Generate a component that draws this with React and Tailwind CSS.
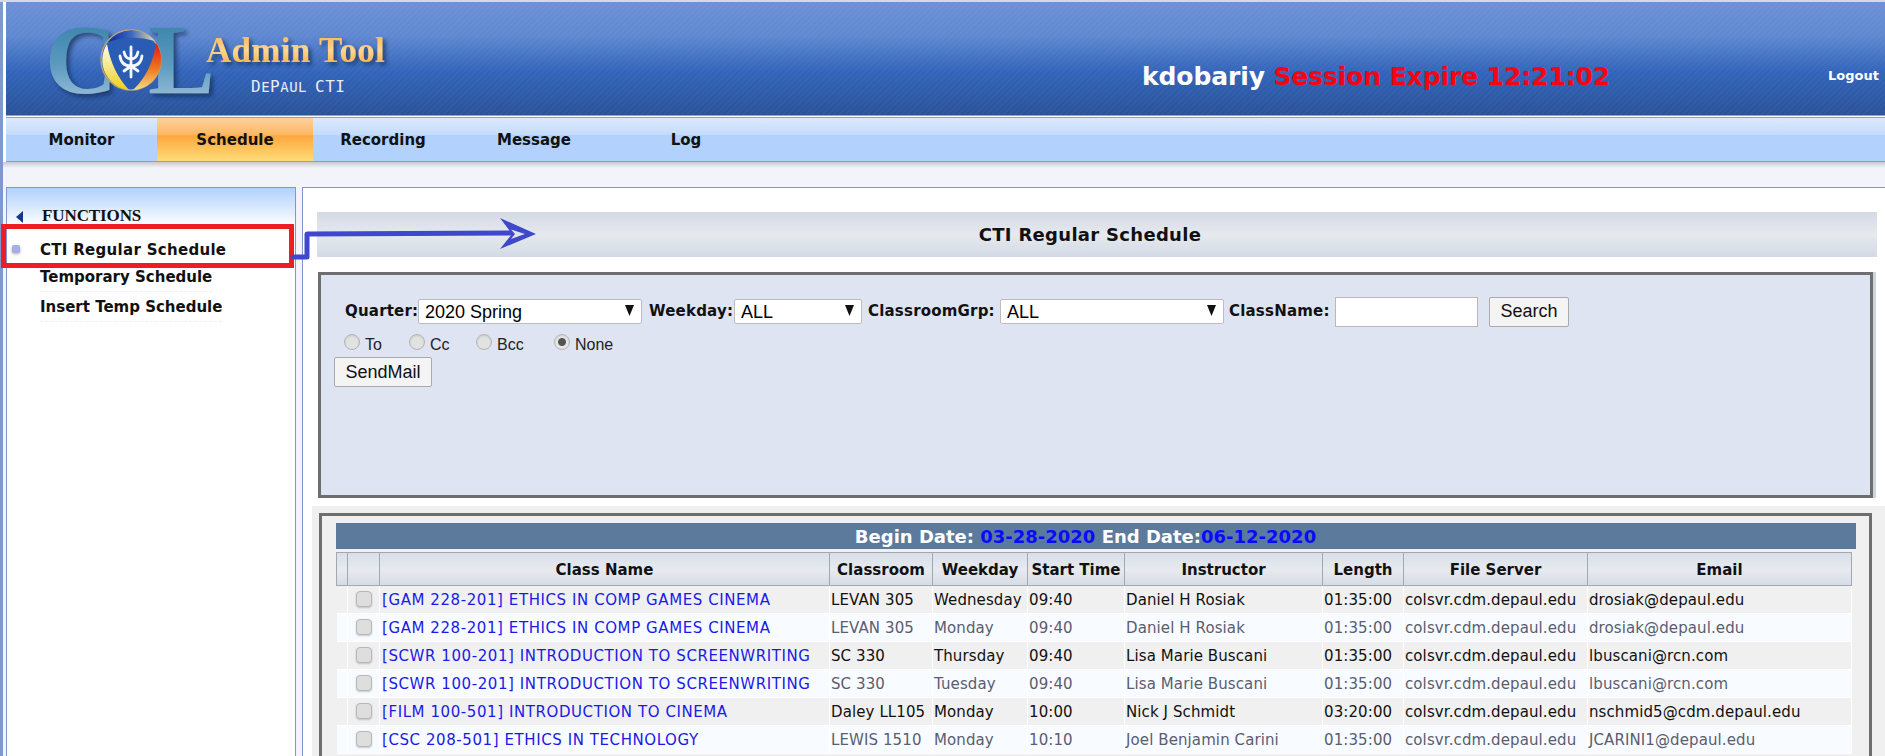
import React from "react";

const rows = [
  ["[GAM 228-201] ETHICS IN COMP GAMES CINEMA", "LEVAN 305", "Wednesday", "09:40", "Daniel H Rosiak", "01:35:00", "colsvr.cdm.depaul.edu", "drosiak@depaul.edu"],
  ["[GAM 228-201] ETHICS IN COMP GAMES CINEMA", "LEVAN 305", "Monday", "09:40", "Daniel H Rosiak", "01:35:00", "colsvr.cdm.depaul.edu", "drosiak@depaul.edu"],
  ["[SCWR 100-201] INTRODUCTION TO SCREENWRITING", "SC 330", "Thursday", "09:40", "Lisa Marie Buscani", "01:35:00", "colsvr.cdm.depaul.edu", "lbuscani@rcn.com"],
  ["[SCWR 100-201] INTRODUCTION TO SCREENWRITING", "SC 330", "Tuesday", "09:40", "Lisa Marie Buscani", "01:35:00", "colsvr.cdm.depaul.edu", "lbuscani@rcn.com"],
  ["[FILM 100-501] INTRODUCTION TO CINEMA", "Daley LL105", "Monday", "10:00", "Nick J Schmidt", "03:20:00", "colsvr.cdm.depaul.edu", "nschmid5@cdm.depaul.edu"],
  ["[CSC 208-501] ETHICS IN TECHNOLOGY", "LEWIS 1510", "Monday", "10:10", "Joel Benjamin Carini", "01:35:00", "colsvr.cdm.depaul.edu", "JCARINI1@depaul.edu"],
];

const heads = ["", "", "Class Name", "Classroom", "Weekday", "Start Time", "Instructor", "Length", "File Server", "Email"];
const widths = [11, 32, 450, 103, 95, 97, 198, 81, 184, 264];

function Logo() {
  return (
    <svg width="420" height="114" viewBox="6 2 420 114" className="shrink-0">
      <defs>
        <linearGradient id="col" x1="0" y1="0" x2="0" y2="1">
          <stop offset="0" stopColor="#2c7ba6" />
          <stop offset="0.55" stopColor="#5d9abf" />
          <stop offset="1" stopColor="#aecde3" />
        </linearGradient>
        <linearGradient id="gold" x1="0" y1="0" x2="0" y2="1">
          <stop offset="0" stopColor="#f7b24c" />
          <stop offset="0.5" stopColor="#ffd58f" />
          <stop offset="1" stopColor="#f6a431" />
        </linearGradient>
        <linearGradient id="segTop" x1="0" y1="0" x2="1" y2="0">
          <stop offset="0" stopColor="#16249a" />
          <stop offset="0.5" stopColor="#3a68c2" />
          <stop offset="1" stopColor="#ead9a2" />
        </linearGradient>
        <linearGradient id="segRight" x1="0" y1="0" x2="0" y2="1">
          <stop offset="0" stopColor="#e0141a" />
          <stop offset="0.55" stopColor="#ee7a1e" />
          <stop offset="1" stopColor="#f6dc8a" />
        </linearGradient>
        <linearGradient id="segLeft" x1="0" y1="0" x2="0" y2="1">
          <stop offset="0" stopColor="#fbfbf2" />
          <stop offset="0.45" stopColor="#f6ea92" />
          <stop offset="1" stopColor="#f0cf14" />
        </linearGradient>
        <filter id="sh" x="-20%" y="-20%" width="140%" height="140%">
          <feDropShadow dx="3" dy="3" stdDeviation="2" floodColor="#10264f" floodOpacity="0.7" />
        </filter>
        <filter id="soft" x="-10%" y="-10%" width="120%" height="120%">
          <feGaussianBlur stdDeviation="0.5" />
        </filter>
      </defs>
      <g filter="url(#sh)" fontFamily="'Liberation Serif', serif">
        <text x="45" y="93" fontSize="100" fontWeight="700" fill="url(#col)">C</text>
        <text x="148" y="93" fontSize="100" fontWeight="700" fill="url(#col)">L</text>
        <text x="206" y="62" fontSize="35" fontWeight="700" letterSpacing="0.3" fill="url(#gold)">Admin Tool</text>
      </g>
      <g filter="url(#soft)">
        <circle cx="131" cy="60" r="30" fill="#2b5cb3" stroke="#b9a678" strokeWidth="1.4" />
        <path d="M107 44 A30 30 0 0 0 129 90 Q 112 72 107 44 Z" fill="url(#segLeft)" />
        <path d="M156 43 A30 30 0 0 1 133 90 Q 152 72 156 43 Z" fill="url(#segRight)" />
        <path d="M108 42 A30 30 0 0 1 155 41 Q 131 34 108 42 Z" fill="url(#segTop)" />
        <path d="M131 47 V77 M120 56 C121 64 126 66 131 66 C136 66 141 64 142 56 M124 52 C125 57 128 59 131 59 C134 59 137 57 138 52 M124 71 L131 66 L138 71" stroke="#f4f7fc" strokeWidth="2.8" fill="none" strokeLinecap="round" />
      </g>
      <text x="251" y="92" fontSize="14" fill="#e8eef8" letterSpacing="0.5" fontFamily="'DejaVu Sans Mono', monospace">
        <tspan fontSize="16">D</tspan>E<tspan fontSize="16">P</tspan>AUL<tspan dx="8" fontSize="16">CTI</tspan>
      </text>
    </svg>
  );
}

function Select({ value, className }) {
  return (
    <span className={`relative inline-block h-[25px] ${className}`}>
      <select
        defaultValue={value}
        className="appearance-none w-full h-full bg-white border border-[#bdbdbd] rounded-[2px] pl-[6px] text-[18px] leading-[22px] text-black font-['Liberation_Sans',sans-serif]"
      >
        <option>{value}</option>
      </select>
      <svg width="9" height="11" viewBox="0 0 9 11" className="absolute right-[8px] top-[6px] pointer-events-none">
        <path d="M0 0 H9 L4.5 11 Z" fill="#111" />
      </svg>
    </span>
  );
}

function Radio({ label, checked, className }) {
  return (
    <label className={`flex items-center text-[16px] text-[#222] font-['Liberation_Sans',sans-serif] ${className}`}>
      <input
        type="radio"
        readOnly
        checked={!!checked}
        className="appearance-none w-[16px] h-[16px] rounded-full border border-[#b4b4b4] bg-[#e2e2e2] shadow-[inset_0_1px_2px_rgba(0,0,0,0.12)] checked:bg-[radial-gradient(circle,#555_0,#555_3.5px,#e8e8e8_4.5px)] -mt-[5px]"
      />
      <span className="ml-[5px] mt-[1px]">{label}</span>
    </label>
  );
}

function Label({ children, className = "" }) {
  return <span className={`font-bold text-[15px] tracking-[0.2px] text-[#111] whitespace-nowrap ${className}`}>{children}</span>;
}

export default function App() {
  return (
    <div className="w-[1885px] h-[756px] overflow-hidden relative bg-white font-['DejaVu_Sans',sans-serif]">
      <div className="h-[2px] bg-[#d8d8e0]" />
      <div className="h-[754px] border-l-[3px] border-[#7f98d0] flex flex-col">
        <div className="pl-[3px] bg-white">
          {/* header */}
          <header className="h-[114px] flex bg-[repeating-linear-gradient(135deg,rgba(255,255,255,0.025)_0,rgba(255,255,255,0.025)_2px,transparent_2px,transparent_4px),linear-gradient(180deg,#6c91d6_0%,#5f88d0_30%,#3264ba_62%,#2b5298_100%)] border-b border-[#8aa4cf]">
            <Logo />
            <div className="ml-[716px] mt-[60px] text-[25px] font-bold leading-[30px] whitespace-nowrap tracking-[-0.1px]">
              <span className="text-white">kdobariy</span>{" "}
              <span className="text-[#f60414]">Session Expire 12:21:02</span>
            </div>
            <a className="ml-auto mr-[6px] mt-[66px] text-white text-[13px] font-bold leading-[16px]">Logout</a>
          </header>
          {/* nav */}
          <nav className="h-[45px] mt-px flex border-t border-[#7ea3d3] border-b bg-[linear-gradient(180deg,#dce9fd_0%,#c6dcfc_38%,#b2d2fd_40%,#b2d2fd_100%)] font-bold text-[15px] text-[#111]">
            <a className="w-[151px] flex items-center justify-center pt-[2px]">Monitor</a>
            <a className="w-[156px] flex items-center justify-center pt-[2px] bg-[linear-gradient(180deg,#fdd0a0_0%,#fdb964_38%,#fda83e_42%,#fedc78_100%)]">Schedule</a>
            <a className="w-[140px] flex items-center justify-center pt-[2px]">Recording</a>
            <a className="w-[162px] flex items-center justify-center pt-[2px]">Message</a>
            <a className="w-[142px] flex items-center justify-center pt-[2px]">Log</a>
          </nav>
        </div>
        {/* body */}
        <div className="flex-1 min-h-0 flex flex-col bg-[linear-gradient(180deg,#c9c9cd_0,#f3f4f9_6px)] pt-[25px]">
          <div className="flex-1 min-h-0 flex pl-[3px]">
            {/* sidebar */}
            <aside className="w-[290px] shrink-0 border border-b-0 border-[#8297cf] bg-white">
              <div className="h-[38px] bg-[linear-gradient(180deg,#b1d1fd,#ffffff)] flex items-end pl-[9px] pb-[1px]">
                <svg width="8" height="12" viewBox="0 0 8 12" className="mb-[2px]">
                  <path d="M7 0 V12 L0 6 Z" fill="#16388a" />
                </svg>
                <span className="ml-[18px] font-['Liberation_Serif',serif] font-bold text-[17px] leading-[18px] tracking-[-0.1px] text-[#111]">FUNCTIONS</span>
              </div>
              <ul className="font-bold text-[15px] text-[#111] mt-[8px]">
                <li className="h-[29px] flex items-center relative pl-[33px] pt-[4px] tracking-[0.3px]">
                  <span className="absolute left-[5px] top-[11px] w-[8px] h-[8px] rounded-[2px] bg-[#a5aee6] shadow-[0_1px_3px_#aaa]" />
                  CTI Regular Schedule
                </li>
                <li className="h-[28px] flex items-center pl-[33px]">
                  <span className="border-b border-dashed border-[#eee] leading-[28px]">Temporary Schedule</span>
                </li>
                <li className="h-[30px] flex items-center pl-[33px] pt-[2px]">
                  <span className="border-b border-dashed border-[#eee] leading-[28px]">Insert Temp Schedule</span>
                </li>
              </ul>
            </aside>
            {/* main */}
            <main className="ml-[6px] flex-1 min-w-0 border-t border-l border-[#8297cf] bg-white pl-[14px] pr-[9px] pt-[24px]">
              <h1 className="h-[45px] -mr-[1px] pr-[14px] flex items-center justify-center bg-[linear-gradient(180deg,#d3d9e5,#e6eaee_50%,#d3d9e5)] font-bold text-[18px] tracking-[0.3px] text-[#111]">
                CTI Regular Schedule
              </h1>
              <section className="mt-[15px] ml-[1px] mr-[3px] h-[226px] border-[3px] border-[#6e6e6e] shadow-[3px_0_0_#cfd3de] bg-[#dfe4f2] pl-[13px] pt-[24px]">
                <div className="flex items-center pl-[11px] h-[25px]">
                  <Label className="w-[73px]">Quarter:</Label>
                  <Select value="2020 Spring" className="w-[224px]" />
                  <Label className="ml-[7px] w-[85px]">Weekday:</Label>
                  <Select value="ALL" className="w-[128px]" />
                  <Label className="ml-[6px] w-[132px]">ClassroomGrp:</Label>
                  <Select value="ALL" className="w-[224px]" />
                  <Label className="ml-[5px] w-[106px]">ClassName:</Label>
                  <input className="w-[143px] h-[30px] bg-white border border-[#b8b8b8]" />
                  <button className="ml-[11px] w-[80px] h-[30px] bg-[#f4f4f4] border border-[#aaa] rounded-[2px] text-[18px] font-['Liberation_Sans',sans-serif] text-[#111]">Search</button>
                </div>
                <div className="flex items-center pl-[10px] h-[32px] mt-[4px]">
                  <Radio label="To" className="w-[65px]" />
                  <Radio label="Cc" className="w-[67px]" />
                  <Radio label="Bcc" className="w-[78px]" />
                  <Radio label="None" checked />
                </div>
                <button className="block -mt-[3px] w-[98px] h-[30px] bg-[#f4f4f4] border border-[#aaa] rounded-[2px] text-[18px] font-['Liberation_Sans',sans-serif] text-[#111]">SendMail</button>
              </section>
              <section className="mt-[8px] -ml-[5px] -mr-[9px] h-[260px] bg-[#f0f0f0] pl-[7px] pr-[13px] pt-[7px]">
                <div className="h-[243px] border-[3px] border-b-0 border-[#6e6e6e] bg-[#f0f0f0] pl-[14px] pr-[13px] pt-[7px]">
                  <div className="h-[26px] pr-[21px] bg-[#5c7a9c] flex items-center justify-center font-bold text-[18px] text-white whitespace-nowrap">
                    Begin Date:&nbsp;<span className="text-[#0a0aff]">03-28-2020</span>&nbsp;End Date:<span className="text-[#0a0aff]">06-12-2020</span>
                  </div>
                  <table className="mt-[3px] table-fixed border-collapse w-[1515px]">
                    <colgroup>
                      {widths.map((w, i) => (
                        <col key={i} style={{ width: w }} />
                      ))}
                    </colgroup>
                    <thead>
                      <tr className="h-[33px]">
                        {heads.map((h, i) => (
                          <th key={i} className="border border-[#a0a8b2] bg-[linear-gradient(180deg,#d9dfe9,#e7eaef_50%,#d6dbe5)] font-bold text-[15px] text-[#111] p-0 pt-[2px] whitespace-nowrap">
                            {h}
                          </th>
                        ))}
                      </tr>
                    </thead>
                    <tbody>
                      {rows.map((r, i) => (
                        <tr key={i} className={`h-[28px] ${i % 2 ? "bg-[#f8fbff] text-[#5b5d70]" : "bg-[#f0f0f0] text-[#111]"} text-[15px]`}>
                          <td className="p-0 border-r border-b border-white" />
                          <td className="p-0 border-r border-b border-white text-center">
                            <input type="checkbox" readOnly className="appearance-none block ml-[8px] w-[16px] h-[16px] -mt-[2px] rounded-[4px] border border-[#b8b8b8] bg-[#dedede] shadow-[0_1px_2px_rgba(0,0,0,0.2)]" />
                          </td>
                          <td className="p-0 pl-[2px] pt-[2px] border-r border-b border-white text-[#1a1ae6] tracking-[0.58px] whitespace-nowrap">{r[0]}</td>
                          {r.slice(1).map((c, j) => (
                            <td key={j} className="p-0 pl-[1px] pt-[2px] border-r border-b border-white tracking-[0.1px] whitespace-nowrap overflow-hidden">{c}</td>
                          ))}
                        </tr>
                      ))}
                    </tbody>
                  </table>
                </div>
              </section>
            </main>
          </div>
        </div>
      </div>
      {/* annotation: red box and arrow */}
      <div className="absolute left-[1px] top-[224px] w-[293px] h-[44px] border-[5px] border-[#ee1c25] pointer-events-none" />
      <svg width="260" height="50" viewBox="0 0 260 50" className="absolute left-[290px] top-[215px] pointer-events-none">
        <path d="M3 42 H17 V19 L226 18" fill="none" stroke="#3f48cc" strokeWidth="5" strokeLinejoin="round" strokeLinecap="round" />
        <path d="M210 3 L246 19 L210 34 L222 19 Z" fill="#3f48cc" />
        <path d="M221 14.5 L235 19 L221 24 L225 19 Z" fill="#dfe3ea" />
      </svg>
    </div>
  );
}
